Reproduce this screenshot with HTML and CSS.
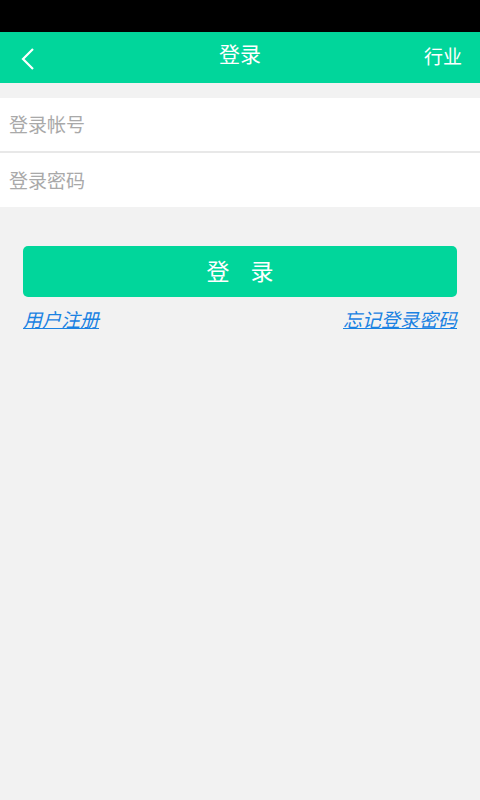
FILE: index.html
```html
<!DOCTYPE html>
<html lang="zh">
<head>
<meta charset="utf-8">
<title>登录</title>
<link rel="stylesheet" href="styles.css">
</head>
<body>
<div class="statusbar"></div>
<header class="topbar">
  <div class="back">
    <svg width="16" height="24" viewBox="0 0 16 24"><path d="M13 2 L3 12 L13 22" fill="none" stroke="#fff" stroke-width="2.2"/></svg>
  </div>
  <div class="title">登录</div>
  <div class="action">行业</div>
</header>
<div class="form">
  <div class="field"><span class="ph">登录帐号</span></div>
  <div class="field"><span class="ph">登录密码</span></div>
</div>
<div class="actions">
  <button class="btn">登录</button>
  <div class="links">
    <a class="link">用户注册</a>
    <a class="link">忘记登录密码</a>
  </div>
</div>
</body>
</html>
```
FILE: styles.css
```css
html, body {
  margin: 0;
  padding: 0;
  background: #f2f2f2;
  font-family: "Noto Sans CJK SC", "Noto Sans", sans-serif;
  width: 480px;
  height: 800px;
  overflow: hidden;
}
.statusbar {
  height: 32px;
  background: #000;
}
.topbar {
  height: 51px;
  background: #01d69b;
  display: flex;
  align-items: center;
  justify-content: space-between;
  padding: 0 18px 0 20px;
  position: relative;
  color: #fff;
}
.back {
  width: 16px;
  height: 24px;
  display: flex;
  margin-top: 2px;
}
.title {
  position: absolute;
  left: 0;
  right: 0;
  text-align: center;
  font-size: 21px;
  line-height: 51px;
  top: -4px;
}
.action {
  font-size: 19px;
  line-height: 51px;
  margin-top: -4px;
}
.form {
  margin-top: 15px;
  display: flex;
  flex-direction: column;
  gap: 2px;
  background: #e8e8e8;
}
.field {
  height: 53px;
  background: #fff;
  display: flex;
  align-items: center;
  padding-left: 9px;
}
.field:last-child { height: 54px; }
.ph {
  color: #a9a9a9;
  font-size: 19px;
  margin-top: -2px;
}
.actions {
  padding: 39px 23px 0 23px;
}
.btn {
  display: block;
  width: 100%;
  height: 51px;
  border: none;
  border-radius: 5px;
  background: #01d69b;
  color: #fff;
  font-family: inherit;
  font-size: 23px;
  letter-spacing: 21px;
  padding: 0 0 4px 21px;
}
.links {
  display: flex;
  justify-content: space-between;
  margin-top: 9px;
}
.link {
  color: #1a82e2;
  font-size: 19px;
  font-style: italic;
  text-decoration: underline;
  line-height: 26px;
}
```
